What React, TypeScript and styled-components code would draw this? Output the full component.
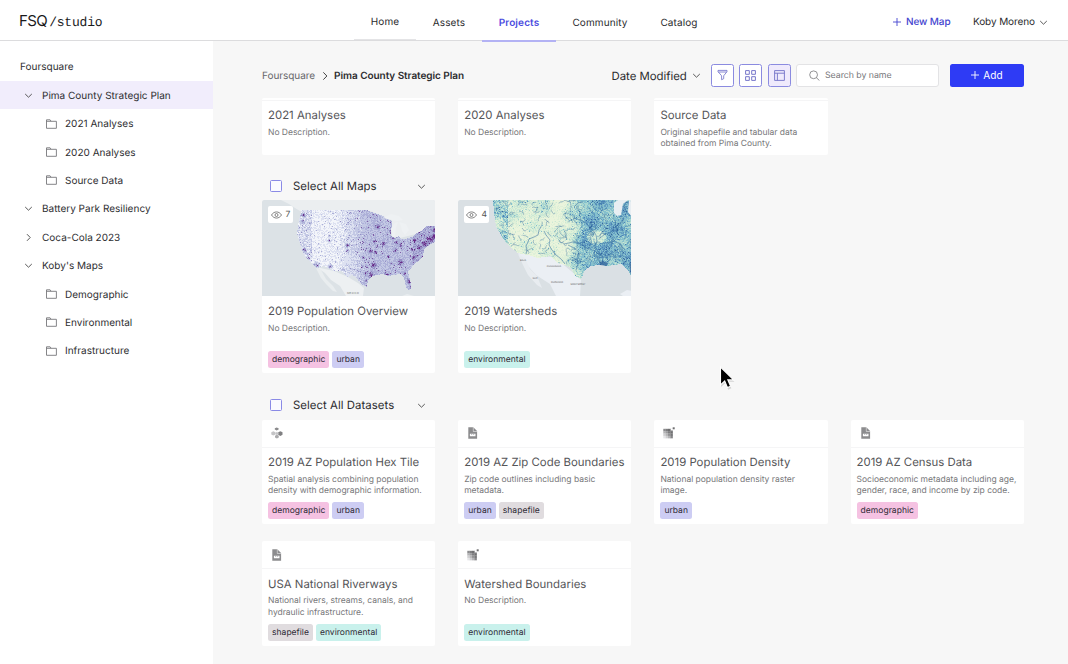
import React from "react";
import styled, { createGlobalStyle } from "styled-components";

const Global = createGlobalStyle`
  * { box-sizing: border-box; }
  body { margin: 0; background: #f7f7f7; overflow: hidden; }
  #root {
    font-family: Inter, "Liberation Sans", sans-serif;
    color: #2b2b2e;
    text-rendering: geometricPrecision;
    -webkit-font-smoothing: antialiased;
  }
`;

/* ---------- shell ---------- */
const Page = styled.div`
  width: 1068px;
  height: 664px;
  display: flex;
  flex-direction: column;
  overflow: hidden;
  background: #f7f7f7;
  white-space: nowrap;
`;
const Header = styled.header`
  height: 41px;
  flex: none;
  display: flex;
  align-items: stretch;
  background: #fff;
  border-bottom: 1px solid #dcdcde;
  padding-left: 19px;
`;
const Logo = styled.div`
  width: 335px;
  display: flex;
  align-items: baseline;
  padding-top: 12px;
  color: #1a1a1c;
  font-size: 15px;
  line-height: 18px;
  letter-spacing: -0.6px;
`;
const LogoMono = styled.span`
  font-family: "Liberation Mono", monospace;
  font-size: 13px;
  letter-spacing: -0.2px;
  margin-left: 2px;
`;
const Nav = styled.nav`
  display: flex;
`;
const NavItem = styled.a<{ $w: number; $active?: boolean; $hover?: boolean }>`
  width: ${(p) => p.$w}px;
  height: ${(p) => (p.$active ? 42 : 40)}px;
  display: flex;
  align-items: center;
  justify-content: center;
  padding-top: ${(p) => (p.$hover ? 4 : 5)}px;
  font-size: 10px;
  letter-spacing: 0.12px;
  font-weight: ${(p) => (p.$active ? 600 : 400)};
  color: ${(p) => (p.$active ? "#4a4be0" : "#2b2b2e")};
  border-bottom: ${(p) => (p.$active ? "2px solid #b3b2f4" : p.$hover ? "1px solid #e4e4e6" : "0")};
`;
const HeaderActions = styled.div`
  margin-left: auto;
  display: flex;
  align-items: center;
  padding: 4px 20px 0 0;
  font-size: 10px;
  letter-spacing: -0.1px;
`;
const NewMap = styled.span`
  display: flex;
  align-items: center;
  gap: 5px;
  width: 80px;
  color: #4344cf;
  font-weight: 500;
`;
const User = styled.span`
  display: flex;
  align-items: center;
  justify-content: space-between;
  width: 75px;
`;
const Body = styled.div`
  flex: 1;
  min-height: 0;
  display: flex;
`;

/* ---------- sidebar ---------- */
const Sidebar = styled.aside`
  width: 213px;
  flex: none;
  background: #fff;
  padding-top: 11.6px;
`;
const TreeRow = styled.div<{ $level: number; $selected?: boolean }>`
  height: 28.4px;
  display: flex;
  align-items: center;
  padding-left: ${(p) => [20, 24, 46][p.$level]}px;
  background: ${(p) => (p.$selected ? "#f1edfc" : "transparent")};
  font-size: 10px;
  letter-spacing: 0.01px;
  color: #2e2e31;
`;
const TreeIcon = styled.span<{ $w: number }>`
  width: ${(p) => p.$w}px;
  display: flex;
`;
const TreeLabel = styled.span`
  padding-top: 1.4px;
`;

/* ---------- main ---------- */
const Main = styled.main`
  flex: 1;
  min-width: 0;
  padding: 22px 44px 0 49px;
  display: flex;
  flex-direction: column;
`;
const Toolbar = styled.div`
  height: 35px;
  flex: none;
  display: flex;
  align-items: flex-start;
`;
const Crumbs = styled.div`
  height: 26px;
  flex: 1;
  display: flex;
  align-items: center;
  font-size: 10px;
  letter-spacing: -0.05px;
  color: #66666a;
  svg { margin: 0 4px 1px 5px; }
`;
const Current = styled.span`
  font-weight: 600;
  color: #2b2b2e;
  letter-spacing: -0.05px;
`;
const Sort = styled.div`
  width: 99px;
  height: 25px;
  display: flex;
  align-items: center;
  gap: 5px;
  font-size: 11.4px;
  letter-spacing: -0.02px;
`;
const IconButton = styled.button<{ $on?: boolean }>`
  width: 23px;
  height: 23px;
  margin: 0.5px 5.5px 0 0;
  padding: 0;
  display: flex;
  align-items: center;
  justify-content: center;
  border: 1px solid #8b8be0;
  border-radius: 2.5px;
  background: ${(p) => (p.$on ? "#efeafc" : "#fff")};
`;
const Search = styled.div`
  width: 143px;
  height: 23px;
  margin-top: 0.5px;
  display: flex;
  align-items: center;
  padding-left: 12px;
  gap: 5px;
  background: #fff;
  border: 1px solid #e3e3e5;
  border-radius: 3px;
  color: #77777b;
  font-size: 8.8px;
  letter-spacing: -0.05px;
`;
const AddButton = styled.button`
  width: 74px;
  height: 23px;
  margin: 0.5px 0 0 11px;
  padding: 0;
  display: flex;
  align-items: center;
  justify-content: center;
  gap: 4px;
  border: 0;
  border-radius: 2.5px;
  background: #2e3bf5;
  color: #fff;
  font: 400 10px Inter, sans-serif;
  letter-spacing: 0.1px;
`;
const Grid = styled.div`
  display: grid;
  flex: none;
  grid-template-columns: repeat(4, 173.2px);
  column-gap: 23px;
  row-gap: 17px;
`;
const Card = styled.article<{ $h: number }>`
  height: ${(p) => p.$h}px;
  display: flex;
  flex-direction: column;
  background: #fff;
  border-radius: 2px;
  overflow: hidden;
`;
const CardHead = styled.div<{ $h: number }>`
  height: ${(p) => p.$h}px;
  flex: none;
  display: flex;
  align-items: center;
  padding-left: 9px;
  border-bottom: 1px solid #f5f5f6;
`;
const Preview = styled.div`
  height: 96px;
  flex: none;
  position: relative;
  svg { display: block; }
`;
const Views = styled.span`
  position: absolute;
  left: 6px;
  top: 6px;
  width: 25px;
  height: 17px;
  display: flex;
  align-items: center;
  justify-content: center;
  gap: 4px;
  border-radius: 2px;
  background: #fff;
  color: #555;
  font-size: 8.5px;
`;
const CardBody = styled.div<{ $gap?: number; $bottom?: number }>`
  flex: 1;
  min-height: 0;
  display: flex;
  flex-direction: column;
  padding: 5.5px 0 ${(p) => p.$bottom ?? 5.5}px 6px;
  h3 + p { margin-top: ${(p) => p.$gap ?? 3.5}px; }
`;
const Title = styled.h3`
  margin: 0;
  font-size: 11.4px;
  line-height: 18px;
  font-weight: 400;
  letter-spacing: 0;
  color: #555558;
`;
const Desc = styled.p`
  margin: 0;
  font-size: 8.5px;
  line-height: 11.5px;
  letter-spacing: -0.02px;
  color: #77777a;
  white-space: pre-line;
`;
const Tags = styled.div`
  margin-top: auto;
  display: flex;
  gap: 3px;
`;
const tagColors = {
  demographic: "#f5c2e2",
  urban: "#cdcdf3",
  environmental: "#c9f1ec",
  shapefile: "#e0dcdf",
};
type TagName = keyof typeof tagColors;
const Tag = styled.span<{ $name: TagName }>`
  height: 17px;
  padding: 0 4px;
  line-height: 18px;
  border-radius: 2.5px;
  background: ${(p) => tagColors[p.$name]};
  font-size: 8.5px;
  letter-spacing: 0.03px;
  color: #2e2a35;
`;
const SectionHead = styled.div<{ $top: number; $h: number }>`
  margin: ${(p) => p.$top}px 0 3.7px;
  height: ${(p) => p.$h}px;
  width: 173px;
  flex: none;
  display: flex;
  align-items: center;
  padding: 0 9px 0 8px;
  font-size: 11.4px;
  letter-spacing: 0.04px;
  svg { margin-left: auto; }
`;
const Checkbox = styled.span`
  width: 12px;
  height: 12px;
  margin-right: 11px;
  border: 1px solid #8a8ae6;
  border-radius: 1.5px;
  background: #fafaff;
`;
const Pointer = styled.div`
  position: absolute;
  left: 716px;
  top: 365px;
`;

/* ---------- icons ---------- */
const Chevron = ({ right, size = 9 }: { right?: boolean; size?: number }) => (
  <svg width={size} height={size} viewBox="0 0 9 9" fill="none" stroke="#444" strokeWidth=".9">
    <path d={right ? "M3 1.2 6.2 4.5 3 7.8" : "M1.2 3 4.5 6.2 7.8 3"} />
  </svg>
);
const Plus = () => (
  <svg width="8" height="8" viewBox="0 0 8 8" stroke="currentColor" strokeWidth=".9">
    <path d="M4 0v8M0 4h8" />
  </svg>
);
const Folder = () => (
  <svg width="11" height="10" viewBox="0 0 11 10" fill="none" stroke="#77777a" strokeWidth=".9">
    <path d="M.5 9.3V.8h3.6l1 1.500h5.300v7zM.5 2.300h4.600" />
  </svg>
);
const Filter = () => (
  <svg width="11" height="12" viewBox="0 0 11 12" fill="none" stroke="#6d6dc8" strokeWidth=".8">
    <path d="M1 1.4h9v1.200L6.700 6.800v2.900l-2.100 1V6.800L1 2.600zM1.200 3h8.600" />
  </svg>
);
const Tiles = () => (
  <svg width="11" height="11" viewBox="0 0 11 11" fill="none" stroke="#6868c4" strokeWidth=".9">
    <path d="M.6.6h3.7v3.700H.6zM6.700.6h3.700v3.700H6.700zM.6 6.700h3.700v3.700H.6zM6.700 6.700h3.700v3.700H6.700z" />
  </svg>
);
const Panel = () => (
  <svg width="11" height="11" viewBox="0 0 11 11" fill="none" stroke="#7070c6" strokeWidth=".9">
    <path d="M.6.6h9.800v9.800H.6zM.6 3.200h9.800M3.400 3.200v7.200" />
  </svg>
);
const Magnifier = () => (
  <svg width="11" height="11" viewBox="0 0 11 11" fill="none" stroke="#77777a" strokeWidth=".8">
    <circle cx="4.6" cy="4.8" r="3.9" />
    <path d="m7.4 7.7 3 2.8" />
  </svg>
);
const Eye = () => (
  <svg width="11" height="8" viewBox="0 0 11 8" fill="none" stroke="#666" strokeWidth=".8">
    <path d="M.5 4C3-.1 8-.1 10.500 4 8 8.100 3 8.100.5 4z" />
    <circle cx="5.500" cy="4" r="1.500" />
  </svg>
);
const HexIcon = () => (
  <svg width="12" height="12" viewBox="0 0 12 12">
    <path fill="#8a8a8c" d="m5.700.4 1.900.8v1.300l-1.900.9-1.900-.9V1.200z" />
    <path fill="#c4c4c6" d="m2.300 4.300 2.100 1v2.200l-2.100 1-2-1V5.300z" />
    <path fill="#aaaaac" d="m5.900 7.700 1.900 1v1.700l-1.900 1-1.900-1V8.700z" />
    <path fill="#808082" d="m9.400 4.200 2.100 1.100v2.500L9.400 9 7.200 7.800V5.300z" />
    <path fill="#c4c4c6" d="m5.900 5 1.500.8v1.500l-1.500.7-1.500-.7V5.800z" />
  </svg>
);
const FileIcon = () => (
  <svg width="12" height="12" viewBox="0 0 12 12">
    <path fill="#8c8c8e" d="M1.300.3h5l3.800 3.700v7.700H1.300z" />
    <path fill="#fff" d="M6.400.3v3.600h3.700v.5H5.900V.3zM2.900 6.800h5.600v2.500H2.900z" />
    <path stroke="#8c8c8e" strokeWidth=".6" d="M4.700 6.800v1.200M6.700 6.800v1.200" />
  </svg>
);
const rasterCells = [
  ["#8b8b8d", "#7d7d7f", "#6f6f71", "#737375"],
  ["#b2b2b4", "#9b9b9d", "#7d7d7f", "#6e6e70"],
  ["#cfcfd1", "#b5b5b7", "#929294", "#777779"],
  ["#e6e6e8", "#cfcfd1", "#b5b5b7", "#88888a"],
];
const RasterIcon = () => (
  <svg width="13" height="12" viewBox="0 0 13 12">
    {rasterCells.map((row, y) =>
      row.map((c, x) => <rect key={`${x}-${y}`} x={x * 2.35 + 0.3} y={y * 2.35 + 1.8} width="2.5" height="2.5" fill={c} />)
    )}
    <rect x="7.800" y="1.300" width="2.200" height="2.200" fill="#fff" />
    <rect x="9.700" y=".3" width="2" height="2" fill="#6f6f71" />
  </svg>
);
const kinds = { hex: <HexIcon />, file: <FileIcon />, raster: <RasterIcon /> };

/* ---------- map previews ---------- */
const random = (seed: number) => () => {
  seed = (seed * 1664525 + 1013904223) % 4294967296;
  return seed / 4294967296;
};
type Pt = [number, number];
const inside = (poly: Pt[], x: number, y: number) => {
  let hit = false;
  for (let i = 0, j = poly.length - 1; i < poly.length; j = i++) {
    const [xi, yi] = poly[i];
    const [xj, yj] = poly[j];
    if (yi > y !== yj > y && x < ((xj - xi) * (y - yi)) / (yj - yi) + xi) hit = !hit;
  }
  return hit;
};

const usa: Pt[] = [
  [39.5, 10.5], [106, 10.5], [112, 13], [119, 15], [125, 18.5], [130, 21], [129, 36], [133, 38], [137, 36], [140, 39],
  [145, 38.5], [152, 36], [155, 33], [161, 30], [164, 26], [174, 25.5], [174, 41], [166, 46], [162, 50], [161, 57],
  [155, 62], [150, 67], [146, 72], [148, 80], [149.5, 87], [147, 91], [144, 87], [142, 78], [139, 74], [132, 75],
  [127, 76], [120, 74], [111, 76], [106, 80], [105, 87], [99, 84], [94, 77], [90, 75], [86, 77], [80, 71],
  [72, 71], [62, 66], [55, 68], [48, 62], [42, 55], [38, 44], [35, 33], [37, 20],
];
const cities: [number, number, number][] = [
  [41, 15, 1.8], [40, 21, 1.5], [42, 50, 2], [46, 57, 1.5], [54, 65, 3], [68, 66, 2], [71, 71, 1.3], [85, 45, 1.9], [85, 50, 1.3], [67, 40, 1.6],
  [67, 35, 1.2], [81, 69, 1.2], [109, 75, 2.3], [103, 73, 1.5], [103, 80, 1.2], [111, 65, 2.2], [108, 51, 1.6], [115, 26, 2.2], [131, 36, 2.4],
  [143, 34, 2], [121, 43, 1.6], [126, 56, 1.3], [138, 62, 2.3], [147, 81, 2], [149, 87, 1.6], [142, 73, 1.2], [124, 74, 1.6], [151, 57, 1.5],
  [157, 47, 1.9], [162, 43, 2], [167, 39, 2.6], [172, 36, 2.4], [172, 30, 1.5], [138, 45, 1.5], [133, 50, 1.4], [152, 40, 1.5], [149, 49, 1.3],
  [112, 41, 1.3], [101, 57, 1.3], [134, 42, 1.4], [128, 31, 1.2], [100, 66, 1.2], [113, 52, 1.3],
];

function populationLayers() {
  const rnd = random(77);
  const colors = ["#f3f5fa", "#dde1f1", "#c3c8e4", "#adb0d8", "#958fc5", "#7f5ca6", "#6a2a87"];
  const paths = colors.map(() => "");
  for (let y = 10; y < 92; y++)
    for (let x = 34; x < 174; x++) {
      if (!inside(usa, x + 0.5, y + 0.5)) continue;
      const east = Math.max(0, Math.min(1, (x - 72) / 34));
      let v = 0.35 + east * 2.2 + (rnd() - 0.5) * 1.5;
      if (x < 50) v += 1.8 * rnd();
      if (x > 150) v += 0.6;
      const r = rnd();
      if (r > 0.955) v += 2.2;
      for (const [cx, cy, rad] of cities) {
        const d = Math.hypot(x - cx, y - cy);
        if (d < rad * 1.7) v += (1 - d / (rad * 1.7)) * 4.5 * (0.3 + rnd() * 0.9);
      }
      const k = Math.max(0, Math.min(6, Math.round(v)));
      paths[k] += `M${x} ${y}h1v1h-1z`;
    }
  return paths.map((d, i) => <path key={i} d={d} fill={colors[i]} />);
}
const population = populationLayers();

const basin: Pt[] = [
  [35, 0], [174, 0], [174, 78], [170, 70], [164, 64], [157, 65], [150, 66], [142, 65], [133, 66], [127, 70], [123, 79],
  [117, 76], [113, 68], [107, 65], [99, 63], [93, 56], [80, 58], [70, 55], [60, 53], [51, 46], [44, 37], [38, 26], [36, 12],
];
function watershedLayers() {
  const rnd = random(1234);
  const colors = ["#eaf4dc", "#dff0d8", "#cbe8d5", "#abd7d1", "#86c0cd", "#659fc3", "#4b83b4", "#39689f"];
  const paths = colors.map(() => "");
  for (let y = 0; y < 80; y++)
    for (let x = 35; x < 174; x++) {
      if (!inside(basin, x + 0.5, y + 0.5)) continue;
      const east = Math.max(0, Math.min(1, (x - 106) / 20));
      const wave = Math.sin(x * 0.23 + y * 0.11) + Math.cos(y * 0.27 - x * 0.09);
      let v = 0.7 + east * 3.4 + wave * 0.5 + (rnd() - 0.5) * 1.7;
      if (x < 50) v += 2.2 * rnd() + 0.8;
      if (y < 18 && x < 92) v += 0.9;
      if (rnd() > 0.95) v += 2;
      if (Math.hypot((x - 138) / 1.3, y - 37) < 7) v -= 1.8;
      const k = Math.max(0, Math.min(7, Math.round(v)));
      paths[k] += `M${x} ${y}h1v1h-1z`;
    }
  let streams = "";
  for (let i = 0; i < 190; i++) {
    let x = i < 110 ? 108 + rnd() * 66 : 38 + rnd() * 70;
    let y = rnd() * 68;
    let a = rnd() * 6.3;
    if (!inside(basin, x, y)) continue;
    streams += `M${x.toFixed(1)} ${y.toFixed(1)}`;
    for (let s = 0; s < (i < 110 ? 7 : 4); s++) {
      a += (rnd() - 0.5) * 2;
      x += Math.cos(a) * 1.6;
      y += Math.sin(a) * 1.6;
      if (!inside(basin, x, y)) break;
      streams += `L${x.toFixed(1)} ${y.toFixed(1)}`;
    }
  }
  return (
    <>
      {paths.map((d, i) => <path key={i} d={d} fill={colors[i]} />)}
      <path d={streams} fill="none" stroke="#33699f" strokeWidth=".7" opacity=".55" />
    </>
  );
}
const watersheds = watershedLayers();

const PopulationMap = () => (
  <svg width="174" height="96" viewBox="0 0 174 96">
    <path fill="#dce2e6" d="M0 0h174v96H0z" />
    <path fill="#ebeef0" d="M19 0h155v28l-12 4-24 6-8-2V20L108 11H38l-5-3-6-4z" />
    <path fill="#edf0f2" d="m54 67 18 4 14 6 10 6 6 5-1 8H84l-6-10-9-6-6-7z" />
    <path fill="#e9edef" d="m54 68 5 2 5 9 7 7 4 6-4-1-7-7-5-6z" />
    <path fill="#e9edef" d="m140 96 5-2 7 2z" />
    {population}
    <path fill="#eef1f3" d="m133 23 3-1-2 5-1 9c-1 2-3 1-3-1l-1-6zM121 18l8-4 8 2 4 4-6 1-5-1zM137 22l7 2 3 6-4 5-3-4-1-5z" />
    <text x="91" y="93.5" textAnchor="middle" fontSize="2.8" letterSpacing=".2" fill="#777">MEXICO</text>
  </svg>
);
const WatershedMap = () => (
  <svg width="174" height="96" viewBox="0 0 174 96">
    <path fill="#dae0e4" d="M0 0h174v96H0z" />
    <path fill="#ebeff4" d="m60 53 20 3 15 1 12 9 12 10 4 4-1 16H98l-6-12-14-9-9-10z" />
    <path fill="#e8ecf0" d="m60 54 7 4 5 11 7 7 5 12-5-3-9-10-5-10z" />
    <path fill="#ebeff4" d="m162 94 7-4 5 1v5h-9z" />
    {watersheds}
    <path fill="none" stroke="#2f67a0" strokeWidth=".7" opacity=".75" d="M68 54l1-4-1-4 2-4 1-3 5-2 4-2 1-5 2-3M107 64l-4-5-6-5-3-4-3-5 1-5-4-5-2-4M144 64l1-5-2-4-4-5-2-4 2-5-1-6-4-6-6-6-5-3-7-2M143 56l-6-5-8-3-6-4-8-2-9 2M142 38l5-4 6-2 5-6 5-3 3-5M141 44l6-1 9-2 6 3 5 6M116 7l4-4 5-1M118 70l2-6-1-6 2-6-5-4-6-3" />
    <path fill="#2c5b97" opacity=".7" d="m141 62 4-1 5 2-1 3-7-1zM171 62l3 3v12l-2-5z" />
    <path fill="#e8eef2" d="m156 3 4-3h10l-5 4-2 11-4 1-3-3zM171 0h3v17l-4-5z" />
    <g fontSize="2.4" fill="#666" textAnchor="middle">
      <text x="96" y="67">CHIHUAHUA</text>
      <text x="99" y="83">DURANGO</text>
      <text x="120" y="85">MONTERREY</text>
      <text x="65" y="61">BAJA</text>
      <text x="77" y="79">SUR</text>
    </g>
  </svg>
);

/* ---------- data ---------- */
const tree: { label: string; level: number; open?: boolean; selected?: boolean }[] = [
  { label: "Foursquare", level: 0 },
  { label: "Pima County Strategic Plan", level: 1, open: true, selected: true },
  { label: "2021 Analyses", level: 2 },
  { label: "2020 Analyses", level: 2 },
  { label: "Source Data", level: 2 },
  { label: "Battery Park Resiliency", level: 1, open: true },
  { label: "Coca-Cola 2023", level: 1, open: false },
  { label: "Koby's Maps", level: 1, open: true },
  { label: "Demographic", level: 2 },
  { label: "Environmental", level: 2 },
  { label: "Infrastructure", level: 2 },
];
const folders = [
  { title: "2021 Analyses", desc: "No Description." },
  { title: "2020 Analyses", desc: "No Description." },
  { title: "Source Data", desc: "Original shapefile and tabular data\nobtained from Pima County." },
];
const datasets: { title: string; desc: string; kind: keyof typeof kinds; tags: TagName[] }[] = [
  { title: "2019 AZ Population Hex Tile", desc: "Spatial analysis combining population\ndensity with demographic information.", kind: "hex", tags: ["demographic", "urban"] },
  { title: "2019 AZ Zip Code Boundaries", desc: "Zip code outlines including basic\nmetadata.", kind: "file", tags: ["urban", "shapefile"] },
  { title: "2019 Population Density", desc: "National population density raster\nimage.", kind: "raster", tags: ["urban"] },
  { title: "2019 AZ Census Data", desc: "Socioeconomic metadata including age,\ngender, race, and income by zip code.", kind: "file", tags: ["demographic"] },
  { title: "USA National Riverways", desc: "National rivers, streams, canals, and\nhydraulic infrastructure.", kind: "file", tags: ["shapefile", "environmental"] },
  { title: "Watershed Boundaries", desc: "No Description.", kind: "raster", tags: ["environmental"] },
];
const maps: { title: string; views: number; art: React.ReactNode; tags: TagName[] }[] = [
  { title: "2019 Population Overview", views: 7, art: <PopulationMap />, tags: ["demographic", "urban"] },
  { title: "2019 Watersheds", views: 4, art: <WatershedMap />, tags: ["environmental"] },
];
const TagList = ({ tags }: { tags: TagName[] }) => (
  <Tags>{tags.map((t) => <Tag key={t} $name={t}>{t}</Tag>)}</Tags>
);

export default function App() {
  return (
    <Page>
      <Global />
      <Header>
        <Logo>FSQ<LogoMono>/studio</LogoMono></Logo>
        <Nav>
          <NavItem $w={62} $hover>Home</NavItem>
          <NavItem $w={66}>Assets</NavItem>
          <NavItem $w={74} $active>Projects</NavItem>
          <NavItem $w={88}>Community</NavItem>
          <NavItem $w={70}>Catalog</NavItem>
        </Nav>
        <HeaderActions>
          <NewMap><Plus />New Map</NewMap>
          <User>Koby Moreno<Chevron /></User>
        </HeaderActions>
      </Header>
      <Body>
        <Sidebar>
          {tree.map((n) => (
            <TreeRow key={n.label} $level={n.level} $selected={n.selected}>
              {n.level === 1 && <TreeIcon $w={18}><Chevron right={!n.open} /></TreeIcon>}
              {n.level === 2 && <TreeIcon $w={19}><Folder /></TreeIcon>}
              <TreeLabel>{n.label}</TreeLabel>
            </TreeRow>
          ))}
        </Sidebar>
        <Main>
          <Toolbar>
            <Crumbs>Foursquare<Chevron right size={10} /><Current>Pima County Strategic Plan</Current></Crumbs>
            <Sort>Date Modified<Chevron /></Sort>
            <IconButton><Filter /></IconButton>
            <IconButton><Tiles /></IconButton>
            <IconButton $on><Panel /></IconButton>
            <Search><Magnifier />Search by name</Search>
            <AddButton><Plus />Add</AddButton>
          </Toolbar>
          <Grid>
            {folders.map((f) => (
              <Card key={f.title} $h={56.7}>
                <CardHead $h={2.5} />
                <CardBody>
                  <Title>{f.title}</Title>
                  <Desc>{f.desc}</Desc>
                </CardBody>
              </Card>
            ))}
          </Grid>
          <SectionHead $top={21} $h={21}><Checkbox />Select All Maps<Chevron /></SectionHead>
          <Grid>
            {maps.map((m) => (
              <Card key={m.title} $h={172.6}>
                <Preview>{m.art}<Views><Eye />{m.views}</Views></Preview>
                <CardBody $gap={4.5} $bottom={4.5}>
                  <Title>{m.title}</Title>
                  <Desc>No Description.</Desc>
                  <TagList tags={m.tags} />
                </CardBody>
              </Card>
            ))}
          </Grid>
          <SectionHead $top={22} $h={21}><Checkbox />Select All Datasets<Chevron /></SectionHead>
          <Grid>
            {datasets.map((d) => (
              <Card key={d.title} $h={104.8}>
                <CardHead $h={28}>{kinds[d.kind]}</CardHead>
                <CardBody>
                  <Title>{d.title}</Title>
                  <Desc>{d.desc}</Desc>
                  <TagList tags={d.tags} />
                </CardBody>
              </Card>
            ))}
          </Grid>
        </Main>
      </Body>
      <Pointer>
        <svg width="22" height="26" viewBox="0 0 22 26">
          <path d="M4.500 2v18.500l4.300-4 2.900 6.700 3.200-1.400-2.900-6.500h6z" fill="#000" opacity=".14" transform="translate(.5 1.500)" />
          <path d="M4.500 2v18l4.200-4 2.800 6.600 3.100-1.300-2.800-6.400h5.800z" fill="#000" stroke="#fff" strokeWidth="1.100" />
        </svg>
      </Pointer>
    </Page>
  );
}
